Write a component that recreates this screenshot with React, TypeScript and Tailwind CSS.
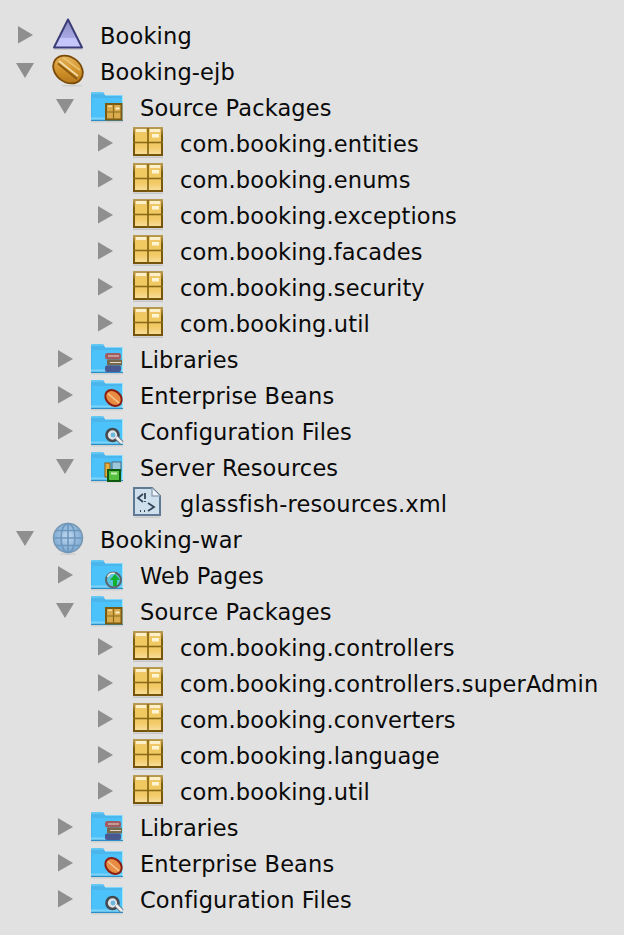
type Kind = "app" | "bean" | "globe" | "source" | "libs" | "beans" | "config" | "server" | "web" | "pkg" | "xml";

type Row = { depth: 0 | 1 | 2; arrow?: "right" | "down"; icon: Kind; label: string };

const rows: Row[] = [
  { depth: 0, arrow: "right", icon: "app", label: "Booking" },
  { depth: 0, arrow: "down", icon: "bean", label: "Booking-ejb" },
  { depth: 1, arrow: "down", icon: "source", label: "Source Packages" },
  { depth: 2, arrow: "right", icon: "pkg", label: "com.booking.entities" },
  { depth: 2, arrow: "right", icon: "pkg", label: "com.booking.enums" },
  { depth: 2, arrow: "right", icon: "pkg", label: "com.booking.exceptions" },
  { depth: 2, arrow: "right", icon: "pkg", label: "com.booking.facades" },
  { depth: 2, arrow: "right", icon: "pkg", label: "com.booking.security" },
  { depth: 2, arrow: "right", icon: "pkg", label: "com.booking.util" },
  { depth: 1, arrow: "right", icon: "libs", label: "Libraries" },
  { depth: 1, arrow: "right", icon: "beans", label: "Enterprise Beans" },
  { depth: 1, arrow: "right", icon: "config", label: "Configuration Files" },
  { depth: 1, arrow: "down", icon: "server", label: "Server Resources" },
  { depth: 2, icon: "xml", label: "glassfish-resources.xml" },
  { depth: 0, arrow: "down", icon: "globe", label: "Booking-war" },
  { depth: 1, arrow: "right", icon: "web", label: "Web Pages" },
  { depth: 1, arrow: "down", icon: "source", label: "Source Packages" },
  { depth: 2, arrow: "right", icon: "pkg", label: "com.booking.controllers" },
  { depth: 2, arrow: "right", icon: "pkg", label: "com.booking.controllers.superAdmin" },
  { depth: 2, arrow: "right", icon: "pkg", label: "com.booking.converters" },
  { depth: 2, arrow: "right", icon: "pkg", label: "com.booking.language" },
  { depth: 2, arrow: "right", icon: "pkg", label: "com.booking.util" },
  { depth: 1, arrow: "right", icon: "libs", label: "Libraries" },
  { depth: 1, arrow: "right", icon: "beans", label: "Enterprise Beans" },
  { depth: 1, arrow: "right", icon: "config", label: "Configuration Files" },
];

const indent = ["pl-[18px]", "pl-[58px]", "pl-[98px]"];

function Arrow({ dir }: { dir?: "right" | "down" }) {
  return (
    <svg width="34" height="36" viewBox="0 0 34 36" className="shrink-0 overflow-visible">
      {dir === "right" && <path d="M0 8 L15 17 L0 25.5 Z" fill="#8f8f8f" />}
      {dir === "down" && <path d="M-2 9 L16 9 L7 24 Z" fill="#8f8f8f" />}
    </svg>
  );
}

function MiniPackage() {
  return (
    <g>
      <rect x="15" y="14" width="15.5" height="15.5" fill="#d9ab4c" stroke="#7a5a10" strokeWidth="2" />
      <path d="M15 22 H30.5 M22.5 14 V29.5" stroke="#8c6a1c" strokeWidth="1.2" />
      <rect x="24.5" y="17.5" width="4" height="2" fill="#fff3cf" />
      <rect x="17" y="15.5" width="4" height="1.5" fill="#f4dca0" />
    </g>
  );
}

function Badge({ kind }: { kind: Kind }) {
  if (kind === "source") return <MiniPackage />;
  if (kind === "libs")
    return (
      <g>
        <rect x="14" y="11" width="16" height="6.5" rx="2.5" fill="#a05c60" />
        <rect x="16" y="17.5" width="15" height="6" rx="1" fill="#76684a" />
        <rect x="14" y="23.5" width="16" height="6.5" rx="2" fill="#4a5890" />
        <path d="M17 14 H28 M19 20.5 H30" stroke="#e8d8c8" strokeWidth="1" />
      </g>
    );
  if (kind === "beans")
    return (
      <g>
        <ellipse cx="22.5" cy="20" rx="9" ry="7" transform="rotate(40 22.5 20)" fill="#e88c44" stroke="#8a1c10" strokeWidth="2" />
        <path d="M17 15.5 L28 25" stroke="#f8c890" strokeWidth="1.6" />
      </g>
    );
  if (kind === "config")
    return (
      <g fill="none">
        <circle cx="21.5" cy="21" r="6" fill="#dfe4e8" stroke="#454a50" strokeWidth="2.6" />
        <circle cx="22" cy="21" r="2.4" fill="#6cb8dc" />
        <path d="M25 23 L31 29" stroke="#6a6e74" strokeWidth="4.5" />
        <path d="M25 23 L31 29" stroke="#eceeef" strokeWidth="2.6" />
      </g>
    );
  if (kind === "server")
    return (
      <g>
        <rect x="14" y="13" width="5" height="14" fill="#e8b040" stroke="#8c5a10" strokeWidth="1" />
        <rect x="21" y="12" width="9" height="9" fill="#9cc8dc" stroke="#4a6a80" strokeWidth="1" />
        <rect x="17" y="20" width="12" height="11" fill="#58c040" stroke="#0e5a10" strokeWidth="2" />
        <rect x="20" y="22.5" width="6" height="2" fill="#c8f0b8" />
      </g>
    );
  return (
    <g>
      <circle cx="22.5" cy="22" r="7.5" fill="#5cc4d8" stroke="#5c646c" strokeWidth="2" />
      <path d="M16.5 19 A6.5 6.5 0 0 1 24 15.5" stroke="#e8f2ea" strokeWidth="1.4" fill="none" />
      <path d="M24 16 L29 22 L26 22 L26 28 L22 28 L22 22 L19 22 Z" fill="#10b030" />
    </g>
  );
}

function Folder({ kind }: { kind: Kind }) {
  return (
    <svg width="34" height="36" viewBox="1 0 34 36" className="shrink-0 overflow-visible">
      <rect x="0" y="31" width="32" height="1.5" fill="#000" opacity="0.08" />
      <path d="M0 3.5 Q0 2 1.5 2 H12 L14 5 L32 5 V30 H0 Z" fill="#4ab6ec" />
      <path d="M1 8 H31 V28 H1 Z" fill="#4cc2fa" />
      <path d="M0.5 3 H12 M14 5.5 H32" stroke="#7fd6f8" strokeWidth="1" fill="none" />
      <path d="M0 28.5 H32" stroke="#7ed2f6" strokeWidth="2" />
      <path d="M0 30.5 H32" stroke="#2a8fc8" strokeWidth="1" />
      <path d="M31.5 5.5 V30" stroke="#9ce6fa" strokeWidth="1" />
      <Badge kind={kind} />
    </svg>
  );
}

function Icon({ kind }: { kind: Kind }) {
  if (kind === "app")
    return (
      <svg width="34" height="36" viewBox="0 0 34 36" className="shrink-0">
        <defs>
          <linearGradient id="appFill" x1="0" y1="0" x2="0" y2="1">
            <stop offset="0" stopColor="#8c8cc0" />
            <stop offset="0.65" stopColor="#a8a8e4" />
            <stop offset="0.66" stopColor="#c4c4fa" />
            <stop offset="1" stopColor="#c8c8fc" />
          </linearGradient>
        </defs>
        <path d="M16 1.5 L30 29.5 H2 Z" fill="url(#appFill)" stroke="#3c3c78" strokeWidth="2" strokeLinejoin="round" />
        <rect x="2" y="31" width="28" height="1" fill="#000" opacity="0.1" />
      </svg>
    );
  if (kind === "bean")
    return (
      <svg width="34" height="36" viewBox="0 0 34 36" className="shrink-0">
        <defs>
          <linearGradient id="beanFill" x1="0" y1="0" x2="1" y2="1">
            <stop offset="0" stopColor="#ecc070" />
            <stop offset="0.5" stopColor="#d4942c" />
            <stop offset="1" stopColor="#a86c14" />
          </linearGradient>
        </defs>
        <ellipse cx="16" cy="15.5" rx="16" ry="12.5" transform="rotate(38 16 15.5)" fill="url(#beanFill)" stroke="#7a4a08" strokeWidth="1.8" />
        <path d="M7 7 L26 22" stroke="#f2dca8" strokeWidth="1.6" />
        <path d="M6 9.5 L25 25" stroke="#8c5a10" strokeWidth="2" />
        <path d="M11 3.5 L28 16" stroke="#f0cc80" strokeWidth="2" opacity="0.7" />
        <rect x="10" y="31" width="20" height="1.5" fill="#000" opacity="0.08" />
      </svg>
    );
  if (kind === "globe")
    return (
      <svg width="34" height="36" viewBox="0 0 34 36" className="shrink-0">
        <defs>
          <radialGradient id="globeFill" cx="0.5" cy="0.45" r="0.6">
            <stop offset="0" stopColor="#c0d8f0" />
            <stop offset="1" stopColor="#74a2cc" />
          </radialGradient>
        </defs>
        <circle cx="16" cy="16" r="14.5" fill="url(#globeFill)" stroke="#7a98b4" strokeWidth="1.5" />
        <g fill="none" stroke="#6c96bc" strokeWidth="1.6">
          <ellipse cx="16" cy="16" rx="7" ry="14.5" />
          <path d="M16 1.5 V30.5 M2 16 H30 M4 8.5 H28 M4 23.5 H28" />
        </g>
        <rect x="8" y="31.5" width="16" height="1.5" fill="#000" opacity="0.08" />
      </svg>
    );
  if (kind === "pkg")
    return (
      <svg width="34" height="36" viewBox="0 0 34 36" className="shrink-0">
        <defs>
          <linearGradient id="pkgFill" x1="0" y1="0" x2="0" y2="1">
            <stop offset="0" stopColor="#e8c878" />
            <stop offset="0.25" stopColor="#f0c860" />
            <stop offset="0.7" stopColor="#f2ca66" />
            <stop offset="1" stopColor="#f8e0a0" />
          </linearGradient>
          <linearGradient id="pkgEdge" x1="0" y1="0" x2="0" y2="1">
            <stop offset="0" stopColor="#b89a50" />
            <stop offset="0.3" stopColor="#80600e" />
            <stop offset="1" stopColor="#74540a" />
          </linearGradient>
        </defs>
        <rect x="2" y="2" width="28" height="27" fill="url(#pkgFill)" stroke="url(#pkgEdge)" strokeWidth="2" />
        <path d="M1 16.5 H31" stroke="#8c6c18" strokeWidth="1.6" />
        <path d="M16 2 V30" stroke="#80600e" strokeWidth="1.6" />
        <rect x="4" y="3" width="10" height="3" fill="#fdf0c8" />
        <rect x="18" y="3" width="10" height="3" fill="#fdf0c8" />
        <rect x="20" y="8" width="7" height="3.5" fill="#fff4d4" />
        <rect x="1" y="30.5" width="30" height="1.5" fill="#000" opacity="0.12" />
      </svg>
    );
  if (kind === "xml")
    return (
      <svg width="34" height="36" viewBox="0 0 34 36" className="shrink-0">
        <path d="M2 2 H20 L28 10 V29 H2 Z" fill="#cfe0ec" stroke="#5e7a94" strokeWidth="2" />
        <path d="M20 2 V10 H28" fill="#f0f4f8" stroke="#8ea4b8" strokeWidth="1.5" />
        <path d="M11 8 L6 12 L11 16 M13 7 V13 M13 15 V16" fill="none" stroke="#33445a" strokeWidth="1.8" />
        <path d="M16 17 L22 21 L16 25 M8 25 H9 M12 25 H13" fill="none" stroke="#33445a" strokeWidth="1.8" />
        <rect x="2" y="30.5" width="26" height="1.5" fill="#000" opacity="0.1" />
      </svg>
    );
  return <Folder kind={kind} />;
}

export default function App() {
  return (
    <div className="min-h-[935px] bg-[#e1e1e1] pt-[18px] font-['DejaVu_Sans',sans-serif] text-[22.5px] tracking-[0.15px] text-[#0a0a0a]">
      {rows.map((row, i) => (
        <div key={i} className={`flex h-9 items-start ${indent[row.depth]}`}>
          <Arrow dir={row.arrow} />
          <Icon kind={row.icon} />
          <span className="ml-[14px] whitespace-nowrap leading-9">{row.label}</span>
        </div>
      ))}
    </div>
  );
}
